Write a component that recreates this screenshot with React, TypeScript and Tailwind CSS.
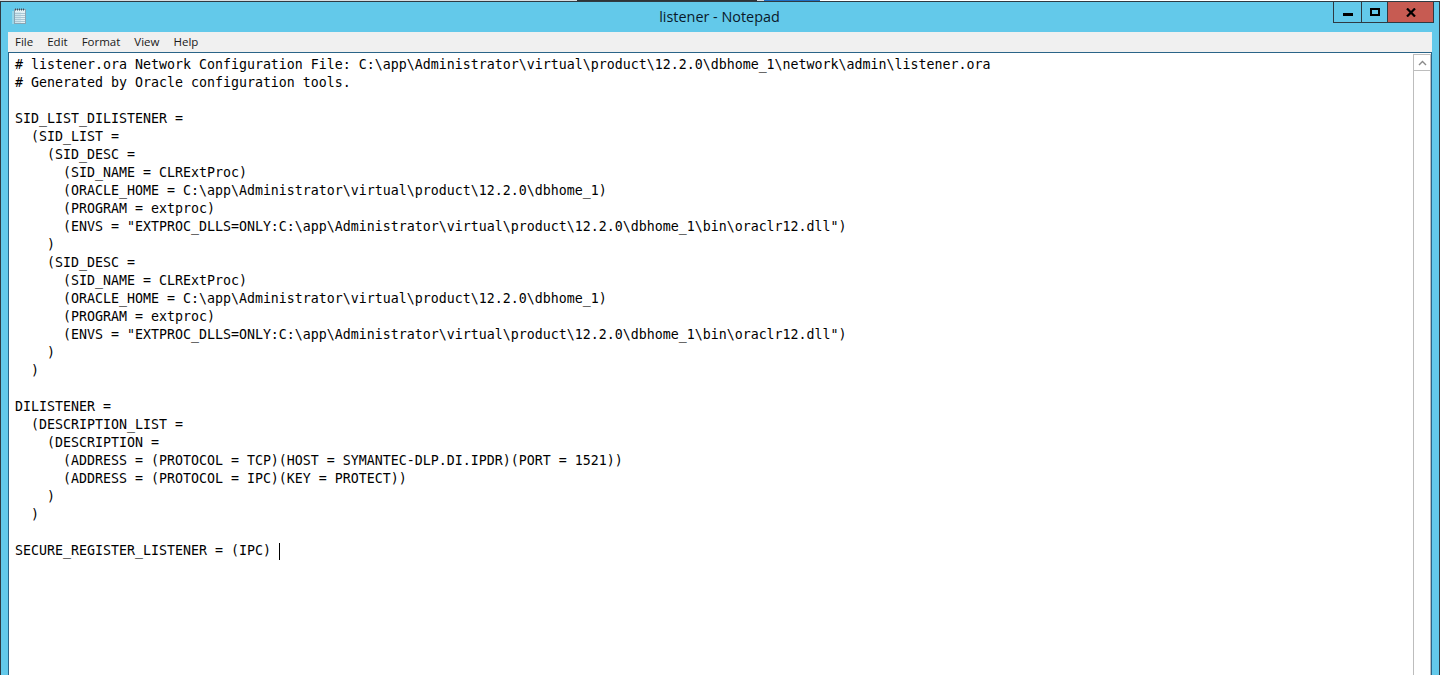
const LINES = [
  "# listener.ora Network Configuration File: C:\\app\\Administrator\\virtual\\product\\12.2.0\\dbhome_1\\network\\admin\\listener.ora",
  "# Generated by Oracle configuration tools.",
  "",
  "SID_LIST_DILISTENER =",
  "  (SID_LIST =",
  "    (SID_DESC =",
  "      (SID_NAME = CLRExtProc)",
  "      (ORACLE_HOME = C:\\app\\Administrator\\virtual\\product\\12.2.0\\dbhome_1)",
  "      (PROGRAM = extproc)",
  "      (ENVS = \"EXTPROC_DLLS=ONLY:C:\\app\\Administrator\\virtual\\product\\12.2.0\\dbhome_1\\bin\\oraclr12.dll\")",
  "    )",
  "    (SID_DESC =",
  "      (SID_NAME = CLRExtProc)",
  "      (ORACLE_HOME = C:\\app\\Administrator\\virtual\\product\\12.2.0\\dbhome_1)",
  "      (PROGRAM = extproc)",
  "      (ENVS = \"EXTPROC_DLLS=ONLY:C:\\app\\Administrator\\virtual\\product\\12.2.0\\dbhome_1\\bin\\oraclr12.dll\")",
  "    )",
  "  )",
  "",
  "DILISTENER =",
  "  (DESCRIPTION_LIST =",
  "    (DESCRIPTION =",
  "      (ADDRESS = (PROTOCOL = TCP)(HOST = SYMANTEC-DLP.DI.IPDR)(PORT = 1521))",
  "      (ADDRESS = (PROTOCOL = IPC)(KEY = PROTECT))",
  "    )",
  "  )",
  "",
];

const MENU = ["File", "Edit", "Format", "View", "Help"];

function NotepadIcon() {
  return (
    <svg width="16" height="17" viewBox="0 0 16 17">
      <rect x="0" y="3" width="3" height="13" fill="#a9dcea" opacity="0.7" />
      <rect x="2.5" y="1.5" width="11" height="14" fill="#e4f1f5" stroke="#8aa4b2" />
      <rect x="3" y="4" width="6" height="11" fill="#cfe6ee" />
      <path d="M3 5.5h10M3 7.5h10M3 9.5h10M3 11.5h10M3 13.5h10" stroke="#a9c6d4" />
      <path d="M3 1.5h10" stroke="#3f5260" strokeWidth="2" strokeDasharray="1 1" />
    </svg>
  );
}

export default function App() {
  return (
    <div className="flex h-[675px] w-[1441px] flex-col overflow-hidden bg-white">
      {/* Bits of the desktop showing behind the window */}
      <div className="flex h-px shrink-0 bg-[#d8dde0]">
        <div className="w-[577px]" />
        <div className="w-[180px] bg-[#2f3437]" />
        <div className="w-[7px] bg-[#d8dde0]" />
        <div className="w-[56px] bg-[#1f6fc4]" />
        <div className="flex-1 bg-white" />
      </div>

      <div className="mr-px flex min-h-0 flex-1 flex-col border-t border-r border-l border-[#2f3a42] bg-[#63c9ea]">
        {/* Title bar */}
        <div className="flex h-[30px] shrink-0 items-start">
          <div className="mt-[6px] ml-[11px]">
            <NotepadIcon />
          </div>
          <div className="flex-1 pt-[6px] pl-[78px] text-center font-['Open_Sans',sans-serif] text-[14.4px] leading-[18px] text-[#0a1a2a]">
            listener - Notepad
          </div>
          <div className="mr-[5px] flex h-[21px] border-x border-b border-[#2f3a42]">
            <div className="flex w-[28px] items-center justify-center border-r border-[#2f3a42]">
              <div className="mt-[4px] h-[3px] w-[10px] bg-black" />
            </div>
            <div className="flex w-[26px] items-center justify-center border-r border-[#2f3a42]">
              <div className="mb-[1px] h-[8px] w-[10px] border-2 border-black" />
            </div>
            <div className="flex w-[45px] items-center justify-center bg-[#c75b52]">
              <svg width="10" height="9" viewBox="0 0 10 9">
                <path d="M1 0.5 9 8.5M9 0.5 1 8.5" stroke="#000" strokeWidth="2.2" />
              </svg>
            </div>
          </div>
        </div>

        {/* Client area */}
        <div className="mx-[7px] flex min-h-0 flex-1 flex-col">
          <div className="flex h-[20px] shrink-0 items-center gap-[14px] bg-[#f0f0f0] pl-[7px] font-['Open_Sans',sans-serif] text-[11.5px] text-[#1a1a1a]">
            {MENU.map((m) => (
              <span key={m}>{m}</span>
            ))}
          </div>
          <div className="flex min-h-0 flex-1 border-x border-t border-[#2a6488] bg-white">
            <div className="flex-1 overflow-hidden pt-[3px] pl-[6px] font-['DejaVu_Sans_Mono',monospace] text-[13.29px] leading-[18px] whitespace-pre text-black">
              {LINES.map((line, i) => (
                <div key={i} className="h-[18px]">
                  {line}
                </div>
              ))}
              <div className="flex h-[18px] items-center">
                <span>SECURE_REGISTER_LISTENER = (IPC) </span>
                <span className="h-[17px] w-px bg-black" />
              </div>
            </div>
            {/* Scrollbar */}
            <div className="mt-px w-[18px] border-x border-[#bdbdbd]">
              <div className="flex h-[17px] items-center justify-center border-y border-[#bdbdbd]">
                <svg width="9" height="6" viewBox="0 0 9 6">
                  <path d="M1 5 4.5 1.5 8 5" fill="none" stroke="#8a8a8a" strokeWidth="1.4" />
                </svg>
              </div>
            </div>
          </div>
        </div>
      </div>
    </div>
  );
}
